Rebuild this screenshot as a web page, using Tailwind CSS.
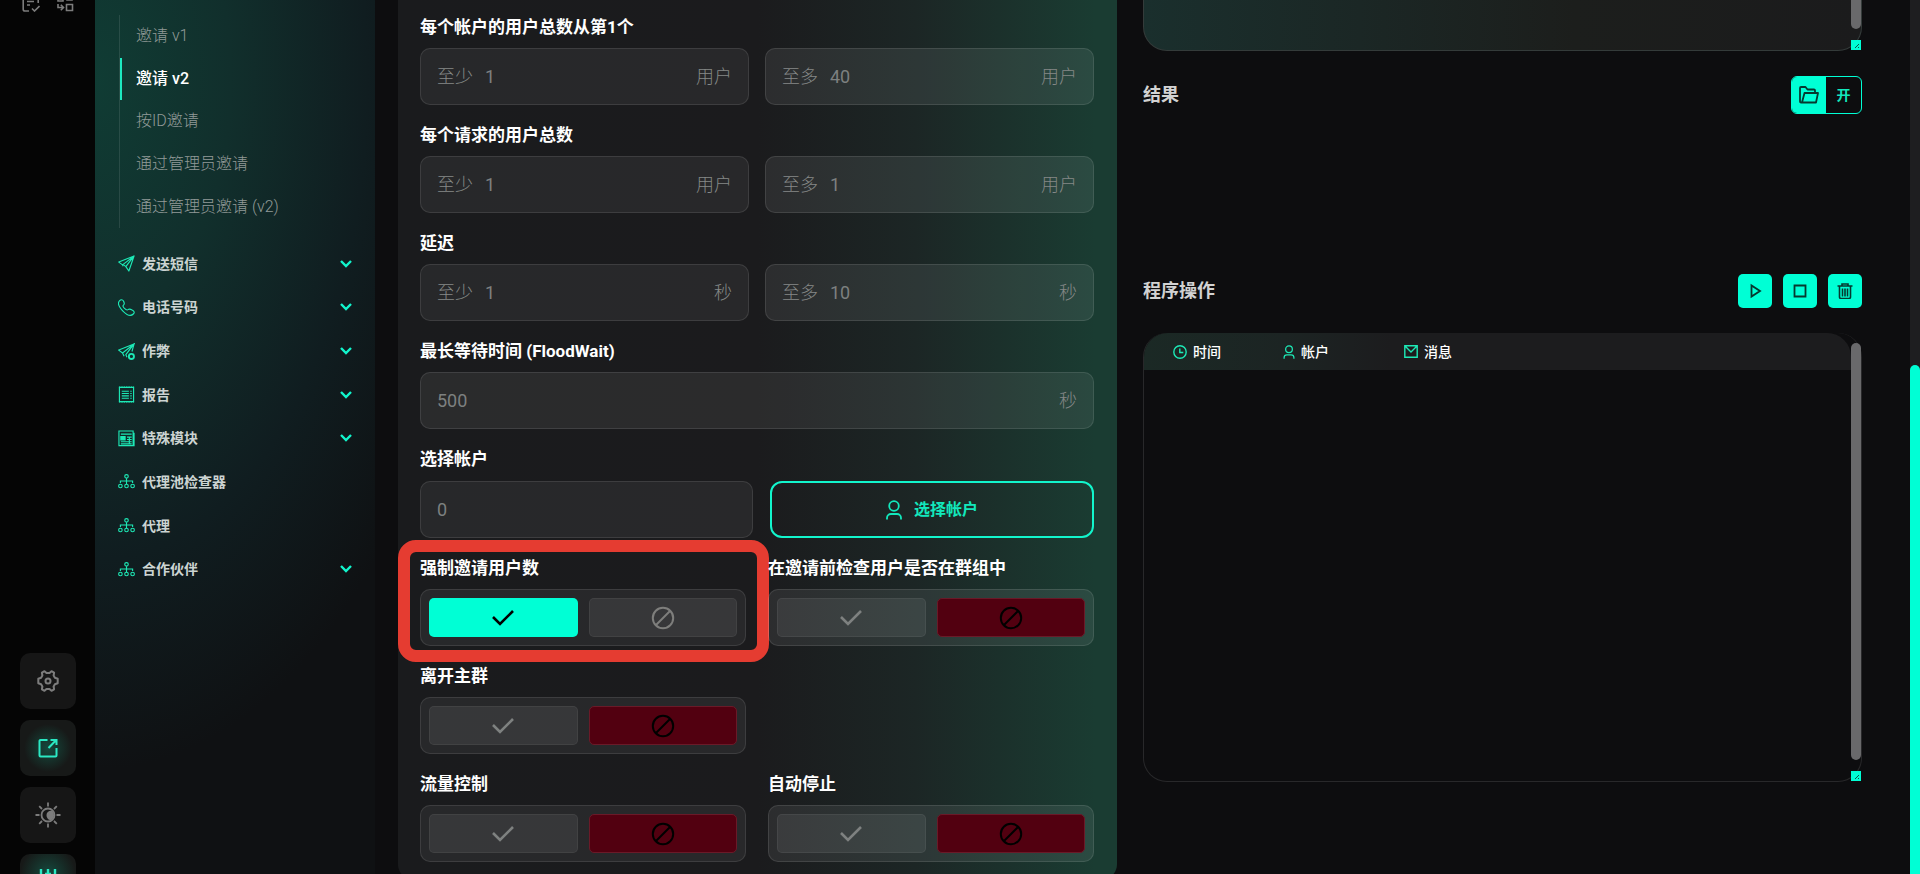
<!DOCTYPE html>
<html lang="zh-CN">

<head>
  <meta charset="UTF-8" />
  <meta name="viewport" content="width=device-width, initial-scale=1.0" />
  <title>邀请 v2</title>
  <script src="https://cdn.jsdelivr.net/npm/@tailwindcss/browser@4"></script>
</head>

<body class="flex h-screen overflow-hidden bg-[#0d0d0f] font-[Roboto,'Noto_Sans_CJK_SC',sans-serif] text-white">

  <!-- Shared icons -->
  <svg class="hidden">
    <symbol id="chevron" viewBox="0 0 12 8"><path d="M1 1l5 5 5-5" fill="none" stroke="currentColor" stroke-width="2.4" /></symbol>
    <symbol id="check" viewBox="0 0 24 18"><path d="M2 8l7 7L22 2" fill="none" stroke="currentColor" stroke-width="2.6" /></symbol>
    <symbol id="ban" viewBox="0 0 24 24"><g fill="none" stroke="currentColor" stroke-width="2"><circle cx="12" cy="12" r="10.2" /><path d="M5 19L19 5" /></g></symbol>
    <symbol id="user" viewBox="0 0 16 20"><g fill="none" stroke="currentColor" stroke-width="1.8"><circle cx="8" cy="6" r="4.8" /><path d="M1 19.5v-1.500a4 4 0 0 1 4-4h6a4 4 0 0 1 4 4v1.500" /></g></symbol>
    <symbol id="plane" viewBox="0 0 18 18"><path d="M17 1L.8 7.500l4 3L17 1l-5.500 16-3.200-4.700L17 1M4.800 10.500l.7 1.500M8.300 12.300L6 10.500" fill="none" stroke="currentColor" stroke-width="1.200" stroke-linejoin="round" /></symbol>
    <symbol id="nodes" viewBox="0 0 18 16"><g fill="none" stroke="currentColor" stroke-width="1.200"><circle cx="9" cy="2.500" r="1.900" /><circle cx="2.500" cy="12.800" r="1.900" /><circle cx="9" cy="12.800" r="1.900" /><circle cx="15.500" cy="12.800" r="1.900" /><path d="M9 4.500v6.400M2.500 9.500V7.500h13v2" /></g></symbol>
  </svg>

  <!-- Icon rail -->
  <aside class="flex w-[95px] shrink-0 flex-col items-center bg-[#050505] text-[#7c7c7c]">
    <div class="-mt-2 flex gap-4">
      <a href="#" aria-label="任务">
        <svg class="h-5 w-[18px]" viewBox="0 0 18 20" fill="none" stroke="currentColor" stroke-width="1.600"><path d="M7 19H3a1.800 1.800 0 0 1-1.800-1.800V3h15v8M5 9.500h7M5 13h3M10 16.500l2.500 2.500 5-5" /></svg>
      </a>
      <a href="#" aria-label="代码">
        <svg class="h-5 w-[18px]" viewBox="0 0 18 20" fill="none" stroke="currentColor" stroke-width="1.600"><path d="M2 3h5v6H2zM11 3h5v5h-5zM10.500 12.500h6v6h-6zM2 12v3.500h5M4.800 12.800L7.500 15.500 4.800 18.200" /></svg>
      </a>
    </div>
    <div class="-mb-9 mt-auto flex flex-col gap-[11px]">
      <button class="grid size-14 place-items-center rounded-[10px] bg-[#161616]" aria-label="设置">
        <svg class="size-6" viewBox="0 0 24 24" fill="none" stroke="currentColor" stroke-width="2" stroke-linejoin="round"><path d="M8.500 2.200l2 1.800h3l2-1.800 2.600 1.500-.5 2.800 1.300 2.300 2.800 1v4.400l-2.800 1-1.300 2.300.5 2.800-2.600 1.500-2-1.800h-3l-2 1.800-2.600-1.500.5-2.800-1.300-2.300-2.800-1V9.800l2.800-1 1.300-2.300-.5-2.800z" /><circle cx="12" cy="12" r="2.500" /></svg>
      </button>
      <button class="grid size-14 place-items-center rounded-[10px] bg-[radial-gradient(circle,#15493d_0%,#171918_60%)] text-[#2be8c3]" aria-label="打开">
        <svg class="size-5" viewBox="0 0 20 20" fill="none" stroke="currentColor" stroke-width="2"><path d="M9.500 2H2.500a1 1 0 0 0-1 1v14.500a1 1 0 0 0 1 1h15a1 1 0 0 0 1-1V10M12.500 2h6v5M18 2.300L10.500 10" /></svg>
      </button>
      <button class="grid size-14 place-items-center rounded-[10px] bg-[#161616]" aria-label="主题">
        <svg class="size-[26px]" viewBox="0 0 26 26" fill="none" stroke="currentColor" stroke-width="1.800"><circle cx="13" cy="13" r="6.500" /><path d="M17.500 9a6 6 0 0 1-1 9c-3 .5-5-2-5-5s3-5 6-4z" fill="currentColor" stroke="none" /><path d="M13 .5v4M13 21.500v4M.5 13h4M21.500 13h4M4.200 4.200L7 7M19 19l2.800 2.800M4.200 21.800L7 19M19 7l2.800-2.800" /></svg>
      </button>
      <button class="grid size-14 place-items-center rounded-[10px] bg-[radial-gradient(circle_at_50%_35%,#15493d_0%,#171918_60%)] text-[#2be8c3]" aria-label="筛选">
        <svg class="h-[26px] w-5" viewBox="0 0 20 26" fill="none" stroke="currentColor" stroke-width="2.400"><path d="M3 0v18M10 0v26M17 0v14M7 5h6" /></svg>
      </button>
    </div>
  </aside>

  <!-- Sidebar menu -->
  <nav class="w-[280px] shrink-0 bg-[radial-gradient(340px_600px_at_0px_80px,#103c34_0%,#112f2c_40%,#101d20_80%,#0f1113_115%)] px-[23px] pt-[15px]">
    <ul class="ml-px grid h-[213px] auto-rows-fr border-l border-white/10 text-base font-light text-[#919a98]">
      <li class="flex items-center pl-4"><a href="#">邀请 v1</a></li>
      <li class="flex items-center border-l-2 border-[#1de9c0] pl-[14px] font-medium text-white"><a href="#">邀请 v2</a></li>
      <li class="flex items-center pl-4"><a href="#">按ID邀请</a></li>
      <li class="flex items-center pl-4"><a href="#">通过管理员邀请</a></li>
      <li class="flex items-center pl-4"><a href="#">通过管理员邀请 (v2)</a></li>
    </ul>
    <ul class="mt-[14px] grid h-[349px] auto-rows-fr text-sm font-bold text-[#ccd4d2]">
      <li><a href="#" class="flex h-full items-center gap-[7px]"><svg class="size-[17px] text-[#1de9b6]"><use href="#plane" /></svg>发送短信<svg class="ml-auto h-2 w-3 text-[#12f5cc]"><use href="#chevron" /></svg></a></li>
      <li><a href="#" class="flex h-full items-center gap-[7px]"><svg class="size-[17px] text-[#1de9b6]" viewBox="0 0 18 18" fill="none" stroke="currentColor" stroke-width="1.200"><path d="M1.500 2C3 .3 4.800.3 5.800 2.200c.9 1.600 1.600 2.800.2 4-1.200 1-.9 1.700.6 3.400 1.600 1.700 2.800 2.700 4 1.700 1.400-1.200 2.400-.8 4.300.4 2.300 1.300 3 2.600 1.300 4.200-2.300 2.300-6.500 1.300-10.700-2.900C1.300 8.800-.7 4.500 1.500 2z" /></svg>电话号码<svg class="ml-auto h-2 w-3 text-[#12f5cc]"><use href="#chevron" /></svg></a></li>
      <li><a href="#" class="flex h-full items-center gap-[7px]"><svg class="size-[17px] text-[#1de9b6]" viewBox="0 0 18 18" fill="none" stroke="currentColor" stroke-width="1.200"><path d="M9.500 15l-1.200-2.700L17 1 .8 7.500l4 3L17 1l-2.200 8M4.800 10.500l1.700 3.500" /><circle cx="14.200" cy="14.200" r="2.700" stroke-width="2" /></svg>作弊<svg class="ml-auto h-2 w-3 text-[#12f5cc]"><use href="#chevron" /></svg></a></li>
      <li><a href="#" class="flex h-full items-center gap-[7px]"><svg class="size-[17px] text-[#1de9b6]" viewBox="0 0 18 18" fill="none" stroke="currentColor" stroke-width="1.200"><path d="M1.500 1.500v15h15v-15z" /><path d="M1 1.200h16M1 16.800h16" stroke-dasharray="1.500 1" stroke-width="1.600" /><path d="M4 5.500h7.500M4 8h7.500M4 10.500h7.500M4 13h7.500M13 5.500h1.500M13 8h1.500M13 10.500h1.500M13 13h1.500" /></svg>报告<svg class="ml-auto h-2 w-3 text-[#12f5cc]"><use href="#chevron" /></svg></a></li>
      <li><a href="#" class="flex h-full items-center gap-[7px]"><svg class="size-[17px] text-[#1de9b6]" viewBox="0 0 18 18" fill="none" stroke="currentColor" stroke-width="1.200"><path d="M16 16V1H1v15.500h16V3M3 4.300h11.500" /><path d="M3 7h4.500v3.500H3z" fill="currentColor" /><path d="M9.500 7.500h5M9.500 10h5M3 12.500h11.500M3 14.700h11.500M12 7v8" /></svg>特殊模块<svg class="ml-auto h-2 w-3 text-[#12f5cc]"><use href="#chevron" /></svg></a></li>
      <li><a href="#" class="flex h-full items-center gap-[7px]"><svg class="h-[15px] w-[17px] text-[#1de9b6]"><use href="#nodes" /></svg>代理池检查器</a></li>
      <li><a href="#" class="flex h-full items-center gap-[7px]"><svg class="h-[15px] w-[17px] text-[#1de9b6]"><use href="#nodes" /></svg>代理</a></li>
      <li><a href="#" class="flex h-full items-center gap-[7px]"><svg class="h-[15px] w-[17px] text-[#1de9b6]"><use href="#nodes" /></svg>合作伙伴<svg class="ml-auto h-2 w-3 text-[#12f5cc]"><use href="#chevron" /></svg></a></li>
    </ul>
  </nav>

  <main class="grid min-w-0 flex-1 grid-cols-2 items-start gap-[26px] pl-[23px] pr-12">

    <!-- Settings form -->
    <form class="flex flex-col gap-[18px] rounded-b-2xl bg-[linear-gradient(90deg,#1a1b1d_0%,#1b1b1d_50%,#1c2625_72%,#1a3c32_97%)] pr-[23px] pb-[18px] pl-[22px] pt-[15px]">
      <div>
        <label for="accMin" class="mb-[9px] block text-[17px] leading-6 font-bold">每个帐户的用户总数从第1个</label>
        <div class="grid grid-cols-2 gap-4 text-lg font-light text-[#858887]">
          <div class="flex h-[57px] items-center gap-3 rounded-[10px] border border-white/10 bg-white/6 px-4">
            <span>至少</span><input id="accMin" type="text" placeholder="1" class="w-0 flex-1 font-normal outline-none placeholder:text-[#7d8080]" /><span>用户</span>
          </div>
          <div class="flex h-[57px] items-center gap-3 rounded-[10px] border border-white/10 bg-white/8 px-4">
            <span>至多</span><input type="text" placeholder="40" aria-label="至多" class="w-0 flex-1 font-normal outline-none placeholder:text-[#7d8080]" /><span>用户</span>
          </div>
        </div>
      </div>

      <div>
        <label for="reqMin" class="mb-[9px] block text-[17px] leading-6 font-bold">每个请求的用户总数</label>
        <div class="grid grid-cols-2 gap-4 text-lg font-light text-[#858887]">
          <div class="flex h-[57px] items-center gap-3 rounded-[10px] border border-white/10 bg-white/6 px-4">
            <span>至少</span><input id="reqMin" type="text" placeholder="1" class="w-0 flex-1 font-normal outline-none placeholder:text-[#7d8080]" /><span>用户</span>
          </div>
          <div class="flex h-[57px] items-center gap-3 rounded-[10px] border border-white/10 bg-white/8 px-4">
            <span>至多</span><input type="text" placeholder="1" aria-label="至多" class="w-0 flex-1 font-normal outline-none placeholder:text-[#7d8080]" /><span>用户</span>
          </div>
        </div>
      </div>

      <div>
        <label for="delayMin" class="mb-[9px] block text-[17px] leading-6 font-bold">延迟</label>
        <div class="grid grid-cols-2 gap-4 text-lg font-light text-[#858887]">
          <div class="flex h-[57px] items-center gap-3 rounded-[10px] border border-white/10 bg-white/6 px-4">
            <span>至少</span><input id="delayMin" type="text" placeholder="1" class="w-0 flex-1 font-normal outline-none placeholder:text-[#7d8080]" /><span>秒</span>
          </div>
          <div class="flex h-[57px] items-center gap-3 rounded-[10px] border border-white/10 bg-white/8 px-4">
            <span>至多</span><input type="text" placeholder="10" aria-label="至多" class="w-0 flex-1 font-normal outline-none placeholder:text-[#7d8080]" /><span>秒</span>
          </div>
        </div>
      </div>

      <div>
        <label for="floodWait" class="mb-[9px] block text-[17px] leading-6 font-bold">最长等待时间 (FloodWait)</label>
        <div class="flex h-[57px] items-center rounded-[10px] border border-white/10 bg-white/7 px-4 text-lg font-light text-[#858887]">
          <input id="floodWait" type="text" placeholder="500" class="w-0 flex-1 font-normal outline-none placeholder:text-[#7d8080]" /><span>秒</span>
        </div>
      </div>

      <div>
        <label for="accounts" class="mb-[10px] block text-[17px] leading-6 font-bold">选择帐户</label>
        <div class="flex h-[57px] gap-[17px]">
          <input id="accounts" type="text" placeholder="0" class="w-[333px] rounded-[10px] border border-white/10 bg-white/6 px-4 text-lg outline-none placeholder:text-[#7d8080]" />
          <button type="button" class="flex flex-1 items-center justify-center gap-3 rounded-xl border-2 border-[#12f5cc] text-base font-bold text-[#12e8bc]">
            <svg class="h-5 w-4"><use href="#user" /></svg>选择帐户
          </button>
        </div>
      </div>

      <!-- Switches -->
      <div class="grid grid-cols-2 gap-x-[22px] gap-y-[18px]">
        <div class="relative">
          <p class="mb-[9px] text-[17px] leading-6 font-bold">强制邀请用户数</p>
          <div class="grid h-[57px] grid-cols-2 gap-[11px] rounded-[10px] border border-white/10 bg-white/6 p-2">
            <button type="button" aria-label="是" aria-pressed="true" class="grid place-items-center rounded-[5px] bg-[#00ffd5] text-black"><svg class="h-[18px] w-6"><use href="#check" /></svg></button>
            <button type="button" aria-label="否" class="grid place-items-center rounded-[5px] border border-white/6 bg-white/7 text-[#7e7e7c]"><svg class="size-6"><use href="#ban" /></svg></button>
          </div>
          <!-- Highlight frame -->
          <div class="pointer-events-none absolute -top-4 -right-[23px] -bottom-4 -left-[22px] rounded-[18px] border-12 border-[#e53c31]"></div>
        </div>

        <div class="relative">
          <p class="mb-[9px] text-[17px] leading-6 font-bold">在邀请前检查用户是否在群组中</p>
          <div class="grid h-[57px] grid-cols-2 gap-[11px] rounded-[10px] border border-white/10 bg-white/8 p-2">
            <button type="button" aria-label="是" class="grid place-items-center rounded-[5px] border border-white/6 bg-white/7 text-[#7e8180]"><svg class="h-[18px] w-6"><use href="#check" /></svg></button>
            <button type="button" aria-label="否" aria-pressed="true" class="grid place-items-center rounded-[5px] border border-[#6a1a28] bg-[#520010] text-black"><svg class="size-6"><use href="#ban" /></svg></button>
          </div>
        </div>

        <div class="col-start-1">
          <p class="mb-[9px] text-[17px] leading-6 font-bold">离开主群</p>
          <div class="grid h-[57px] grid-cols-2 gap-[11px] rounded-[10px] border border-white/10 bg-white/6 p-2">
            <button type="button" aria-label="是" class="grid place-items-center rounded-[5px] border border-white/6 bg-white/7 text-[#7e8180]"><svg class="h-[18px] w-6"><use href="#check" /></svg></button>
            <button type="button" aria-label="否" aria-pressed="true" class="grid place-items-center rounded-[5px] border border-[#6a1a28] bg-[#520010] text-black"><svg class="size-6"><use href="#ban" /></svg></button>
          </div>
        </div>

        <div class="col-start-1">
          <p class="mb-[9px] text-[17px] leading-6 font-bold">流量控制</p>
          <div class="grid h-[57px] grid-cols-2 gap-[11px] rounded-[10px] border border-white/10 bg-white/6 p-2">
            <button type="button" aria-label="是" class="grid place-items-center rounded-[5px] border border-white/6 bg-white/7 text-[#7e8180]"><svg class="h-[18px] w-6"><use href="#check" /></svg></button>
            <button type="button" aria-label="否" aria-pressed="true" class="grid place-items-center rounded-[5px] border border-[#6a1a28] bg-[#520010] text-black"><svg class="size-6"><use href="#ban" /></svg></button>
          </div>
        </div>

        <div>
          <p class="mb-[9px] text-[17px] leading-6 font-bold">自动停止</p>
          <div class="grid h-[57px] grid-cols-2 gap-[11px] rounded-[10px] border border-white/10 bg-white/8 p-2">
            <button type="button" aria-label="是" class="grid place-items-center rounded-[5px] border border-white/6 bg-white/7 text-[#7e8180]"><svg class="h-[18px] w-6"><use href="#check" /></svg></button>
            <button type="button" aria-label="否" aria-pressed="true" class="grid place-items-center rounded-[5px] border border-[#6a1a28] bg-[#520010] text-black"><svg class="size-6"><use href="#ban" /></svg></button>
          </div>
        </div>
      </div>
    </form>

    <!-- Output column -->
    <section>
      <div class="relative h-[51px] rounded-b-3xl border border-t-0 border-[#343b3a] bg-[linear-gradient(90deg,#1a2f2d_0%,#1b2725_30%,#1c1e1c_60%,#1b1b1c_100%)]">
        <div class="absolute top-0 right-0 h-[29px] w-[10px] rounded-b-full bg-[#69696b]"></div>
        <svg class="absolute right-0 bottom-0 size-[10px] bg-[#00ffd5]" viewBox="0 0 10 10" fill="none" stroke="#0a5548"><path d="M4 8l4-4M7 8l1-1" /></svg>
      </div>

      <div class="mt-[25px] flex h-[38px] items-center justify-between">
        <h2 class="text-lg font-bold text-[#d2d2d2]">结果</h2>
        <button class="flex h-full w-[71px] overflow-hidden rounded-md border border-[#00ffd5] text-sm font-bold text-[#12e8bc]">
          <span class="grid h-full w-[34px] place-items-center bg-[#00ffd5] text-[#06382f]">
            <svg class="size-5" viewBox="0 0 20 20" fill="none" stroke="currentColor" stroke-width="1.800" stroke-linejoin="round"><path d="M3 17.500H2a1 1 0 0 1-1-1V3a1 1 0 0 1 1-1h4.500l2 2.500H15a1 1 0 0 1 1 1v2M3 17.500L5.500 8H19l-2 9.500z" /></svg>
          </span>
          <span class="grid h-full flex-1 place-items-center">开</span>
        </button>
      </div>

      <div class="mt-40 flex h-[34px] items-center justify-between">
        <h2 class="text-lg font-bold text-[#d2d2d2]">程序操作</h2>
        <div class="flex gap-[11px] text-[#06382f]">
          <button class="grid size-[34px] place-items-center rounded-[5px] bg-[#00ffd5]" aria-label="开始">
            <svg class="size-4" viewBox="0 0 16 16" fill="none" stroke="currentColor" stroke-width="1.800"><path d="M4.500 2.500v11l8.500-5.500z" /></svg>
          </button>
          <button class="grid size-[34px] place-items-center rounded-[5px] bg-[#00ffd5]" aria-label="停止">
            <svg class="size-4" viewBox="0 0 16 16" fill="none" stroke="currentColor" stroke-width="1.800"><path d="M2.500 2.500h11v11h-11z" /></svg>
          </button>
          <button class="grid size-[34px] place-items-center rounded-[5px] bg-[#00ffd5]" aria-label="清除">
            <svg class="size-4" viewBox="0 0 16 16" fill="none" stroke="currentColor" stroke-width="1.600"><path d="M.5 3h15M5 3V1h6v2M2.500 3.500V14a1.500 1.500 0 0 0 1.500 1.500h8a1.500 1.500 0 0 0 1.500-1.500V3.500M5.500 5.500v8M8 5.500v8M10.500 5.500v8" /></svg>
          </button>
        </div>
      </div>

      <div class="relative mt-[25px] h-[449px] rounded-3xl border border-t-0 border-[#28282a] pr-[10px]">
        <table class="w-full table-fixed overflow-hidden rounded-t-3xl bg-[linear-gradient(90deg,#1b2925_0%,#1c2423_20%,#1c1c1e_35%)] text-left text-sm font-medium">
          <thead>
            <tr class="h-[37px]">
              <th class="w-[139px] pl-[29px] font-medium"><span class="flex items-center gap-[6px]"><svg class="size-[14px] text-[#1de9b6]" viewBox="0 0 14 14" fill="none" stroke="currentColor" stroke-width="1.400"><circle cx="7" cy="7" r="6.200" /><path d="M6.800 3.500v4h3.500" /></svg>时间</span></th>
              <th class="w-[121px] font-medium"><span class="flex items-center gap-[6px]"><svg class="h-[14px] w-3 text-[#1de9b6]"><use href="#user" /></svg>帐户</span></th>
              <th class="font-medium"><span class="flex items-center gap-[6px]"><svg class="h-[13px] w-[14px] text-[#1de9b6]" viewBox="0 0 14 13" fill="none" stroke="currentColor" stroke-width="1.400"><path d="M.8.8h12.400v11.400H.8zM1.500 1.500L7 7l5.500-5.500" /></svg>消息</span></th>
            </tr>
          </thead>
        </table>
        <div class="absolute top-[10px] right-0 bottom-[21px] w-[10px] rounded-full bg-[#69696b]"></div>
        <svg class="absolute right-0 bottom-0 size-[10px] bg-[#00ffd5]" viewBox="0 0 10 10" fill="none" stroke="#0a5548"><path d="M4 8l4-4M7 8l1-1" /></svg>
      </div>
    </section>
  </main>

  <!-- Page scrollbar -->
  <div class="flex w-[10px] shrink-0 flex-col bg-[#1e1e20] pt-[365px]">
    <div class="flex-1 rounded-t-full bg-[#00ffd5]"></div>
  </div>

</body>
</html>
